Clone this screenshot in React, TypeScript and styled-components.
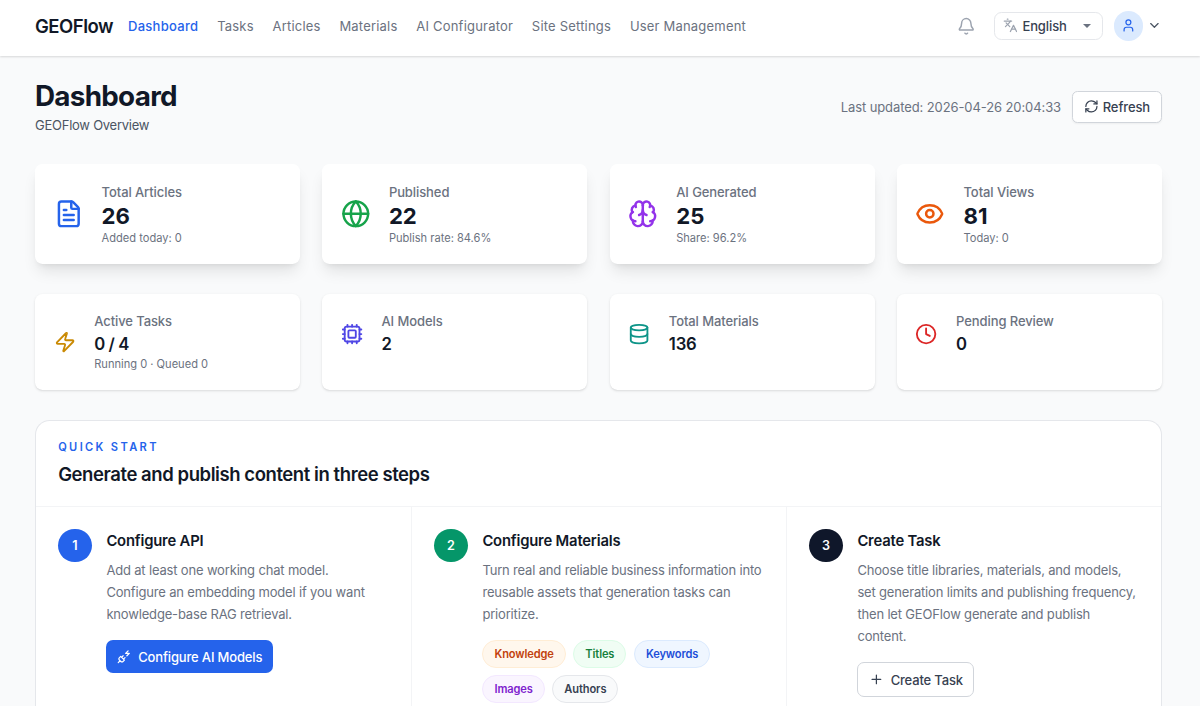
import React from "react";
import styled, { createGlobalStyle } from "styled-components";
import {
  Bell, Brain, ChevronDown, Clock, Cpu, Database, Eye, FileText, Globe, Languages, Plus, RefreshCw, User, Zap,
} from "lucide-react";

const GlobalStyle = createGlobalStyle`
  *, *::before, *::after { box-sizing: border-box; }
  html { height: 100%; overflow: hidden; }
  body {
    margin: 0;
    height: 100%;
    overflow: hidden;
    background: #f9fafb;
    color: #111827;
    font-family: Inter, "Liberation Sans", sans-serif;
    font-size: 13px;
    -webkit-font-smoothing: antialiased;
  }
  #root { height: 100%; }
  h1, h2, h3, p { margin: 0; }
  button { font-family: inherit; margin: 0; }
`;

const Page = styled.div`
  display: flex;
  flex-direction: column;
  height: 100%;
`;

const Header = styled.header`
  display: flex;
  flex: none;
  align-items: center;
  height: 56px;
  padding: 0 38px 4.6px 35px;
  background: #fff;
  box-shadow: 0 1px 2px rgba(0, 0, 0, 0.14);
`;

const Brand = styled.div`
  width: 93px;
  font-size: 18.5px;
  font-weight: 600;
  letter-spacing: -0.5px;
  white-space: nowrap;
`;

const Nav = styled.nav`
  display: flex;
  gap: 18.8px;
  flex: 1;
`;

const NavLink = styled.a<{ $active?: boolean }>`
  font-size: 13px;
  font-weight: ${(p) => (p.$active ? 500 : 400)};
  letter-spacing: ${(p) => (p.$active ? 0.28 : 0.2)}px;
  color: ${(p) => (p.$active ? "#2563eb" : "#6b7280")};
  white-space: nowrap;
`;

const HeaderTools = styled.div`
  display: flex;
  align-items: center;
`;

const BellButton = styled.span`
  display: flex;
  color: #9ca3af;
  margin: 1px 18.4px 0 0;
`;

const LanguageSelect = styled.div`
  display: flex;
  align-items: center;
  width: 109px;
  height: 28px;
  padding: 0 11px 0 8px;
  border: 1px solid #e5e7eb;
  border-radius: 7.4px;
  color: #9ca3af;
`;

const LanguageName = styled.span`
  flex: 1;
  margin-left: 5px;
  font-size: 13px;
  font-weight: 500;
  letter-spacing: -0.1px;
  color: #374151;
`;

const Caret = styled.span`
  border: 4px solid transparent;
  border-top: 4.5px solid #6b7280;
  border-bottom: 0;
`;

const Avatar = styled.span`
  display: flex;
  align-items: center;
  justify-content: center;
  width: 29.6px;
  height: 29.6px;
  margin: 0 4px 0 11px;
  border-radius: 50%;
  background: #dbeafe;
  color: #2563eb;
`;

const Chevron = styled.span`
  display: flex;
  color: #4b5563;
`;

const Main = styled.main`
  display: flex;
  flex: 1;
  flex-direction: column;
  min-height: 0;
  padding: 23px 38px 0 35px;
`;

const PageHead = styled.div`
  display: flex;
  flex: none;
  align-items: center;
  justify-content: space-between;
  height: 55.8px;
  margin-bottom: 29.6px;
`;

const PageTitle = styled.h1`
  padding-top: 1px;
  font-size: 27.8px;
  line-height: 33.3px;
  font-weight: 700;
  letter-spacing: -0.7px;
`;

const PageSubtitle = styled.p`
  margin-top: 2.7px;
  font-size: 13px;
  line-height: 18.5px;
  letter-spacing: -0.25px;
  color: #4b5563;
`;

const PageActions = styled.div`
  display: flex;
  align-items: center;
  gap: 11px;
`;

const Updated = styled.span`
  font-size: 13px;
  letter-spacing: -0.1px;
  color: #6b7280;
  white-space: nowrap;
`;

const RefreshButton = styled.button`
  display: flex;
  align-items: center;
  justify-content: center;
  gap: 4px;
  width: 90px;
  height: 32px;
  padding: 0;
  border: 1px solid #d1d5db;
  border-radius: 5.5px;
  background: #fff;
  box-shadow: 0 1px 2px rgba(0, 0, 0, 0.05);
  font-size: 13px;
  font-weight: 500;
  letter-spacing: -0.1px;
  color: #374151;
`;

const StatGrid = styled.section`
  display: grid;
  flex: none;
  grid-template-columns: repeat(4, 1fr);
  gap: 22.2px;
  margin-bottom: 29.6px;
`;

const StatCard = styled.article<{ $raised?: boolean }>`
  display: flex;
  align-items: flex-start;
  padding: 18.5px;
  border-radius: 7.4px;
  background: #fff;
  box-shadow: ${(p) =>
    p.$raised
      ? "0 10px 15px -3px rgba(0,0,0,0.1), 0 4px 6px -4px rgba(0,0,0,0.1)"
      : "0 1px 3px rgba(0,0,0,0.1), 0 1px 2px -1px rgba(0,0,0,0.1)"};
`;

const StatBody = styled.div`
  display: flex;
  align-items: center;
  gap: 18.5px;
`;

const StatIcon = styled.span<{ $color: string; $large?: boolean }>`
  display: flex;
  padding-bottom: ${(p) => (p.$large ? 1.2 : 0)}px;
  color: ${(p) => p.$color};
`;

const StatLabel = styled.p`
  font-size: 13px;
  line-height: 18.5px;
  font-weight: 500;
  letter-spacing: -0.09px;
  color: #6b7280;
`;

const StatValue = styled.p<{ $large?: boolean }>`
  padding-top: ${(p) => (p.$large ? 0 : 0.8)}px;
  font-size: ${(p) => (p.$large ? 22.2 : 16.7)}px;
  line-height: ${(p) => (p.$large ? 29.6 : 25.1)}px;
  font-weight: ${(p) => (p.$large ? 700 : 600)};
  letter-spacing: ${(p) => (p.$large ? 0 : -0.2)}px;
  word-spacing: ${(p) => (p.$large ? 0 : -0.5)}px;
`;

const StatNote = styled.p`
  font-size: 11.1px;
  line-height: 15.2px;
  margin-bottom: -0.4px;
  color: #6b7280;
`;

const QuickStart = styled.section`
  display: flex;
  flex: 1;
  flex-direction: column;
  min-height: 0;
  border: 1px solid #e5e7eb;
  border-bottom: 0;
  border-radius: 14.8px 14.8px 0 0;
  background: #fff;
`;

const QuickHead = styled.div`
  padding: 19.5px 22.2px 17.5px;
  border-bottom: 1px solid #f3f4f6;
`;

const Eyebrow = styled.p`
  font-size: 11.1px;
  line-height: 14.8px;
  font-weight: 600;
  letter-spacing: 2.35px;
  color: #2563eb;
`;

const QuickTitle = styled.h2`
  margin-top: 7.4px;
  font-size: 18.5px;
  line-height: 25.9px;
  font-weight: 600;
  letter-spacing: -0.43px;
`;

const Steps = styled.div`
  display: grid;
  flex: 1;
  grid-template-columns: repeat(3, 1fr);
  min-height: 0;
`;

const Step = styled.article`
  display: flex;
  gap: 14.8px;
  min-height: 0;
  padding: 22.2px 22.2px 0;
  & + & { border-left: 1px solid #f3f4f6; }
`;

const StepNumber = styled.span<{ $color: string }>`
  display: flex;
  flex: none;
  align-items: center;
  justify-content: center;
  width: 33.4px;
  height: 33.4px;
  border-radius: 50%;
  background: ${(p) => p.$color};
  color: #fff;
  font-size: 12.6px;
  font-weight: 600;
`;

const StepBody = styled.div`
  display: flex;
  flex-direction: column;
  align-items: flex-start;
`;

const StepTitle = styled.h3`
  padding-top: 1px;
  font-size: 14.8px;
  line-height: 22.2px;
  font-weight: 600;
  letter-spacing: -0.18px;
`;

const StepText = styled.p`
  margin: 6.4px 0 14.8px;
  font-size: 13px;
  line-height: 22.2px;
  letter-spacing: -0.17px;
  color: #6b7280;
  white-space: pre;
`;

const StepButton = styled.button<{ $primary?: boolean }>`
  display: flex;
  flex: none;
  align-items: center;
  justify-content: center;
  gap: ${(p) => (p.$primary ? 6.4 : 7)}px;
  width: ${(p) => (p.$primary ? 166.6 : 117)}px;
  height: ${(p) => (p.$primary ? 33.4 : 35.2)}px;
  padding: 0;
  border: ${(p) => (p.$primary ? "0" : "1px solid #d1d5db")};
  border-radius: 7px;
  background: ${(p) => (p.$primary ? "#2563eb" : "#fff")};
  color: ${(p) => (p.$primary ? "#fff" : "#374151")};
  font-size: 13px;
  font-weight: 500;
  letter-spacing: -0.16px;
  white-space: nowrap;
`;

const Chips = styled.div`
  display: flex;
  flex-wrap: wrap;
  gap: 7.4px;
  max-width: 280px;
`;

const Chip = styled.span<{ $tone: Tone }>`
  height: 27.8px;
  padding: 1px 11.1px 0;
  border: 1px solid ${(p) => tones[p.$tone].border};
  border-radius: 14px;
  background: ${(p) => tones[p.$tone].fill};
  color: ${(p) => tones[p.$tone].text};
  font-size: 11.1px;
  line-height: 25.8px;
  font-weight: 600;
  letter-spacing: -0.12px;
`;

const tones = {
  orange: { border: "#ffedd5", fill: "#fff7ed", text: "#c2410c" },
  green: { border: "#dcfce7", fill: "#f0fdf4", text: "#15803d" },
  blue: { border: "#dbeafe", fill: "#eff6ff", text: "#1d4ed8" },
  purple: { border: "#f3e8ff", fill: "#faf5ff", text: "#7e22ce" },
  gray: { border: "#e5e7eb", fill: "#f9fafb", text: "#374151" },
};
type Tone = keyof typeof tones;

const PlugZapIcon = () => (
  <svg width="14.8" height="14.8" viewBox="0 0 24 24" fill="none" stroke="currentColor" strokeWidth="2" strokeLinecap="round" strokeLinejoin="round">
    <path d="M6.300 20.300a2.400 2.400 0 0 0 3.400 0L12 18l-6-6-2.300 2.300a2.400 2.400 0 0 0 0 3.400ZM2 22l3-3M7.500 13.500 10 11M10.500 16.500 13 14M18 3l-4 4h6l-4 4" />
  </svg>
);

const navItems = ["Dashboard", "Tasks", "Articles", "Materials", "AI Configurator", "Site Settings", "User Management"];

const mainStats = [
  { icon: FileText, color: "#2563eb", label: "Total Articles", value: "26", note: "Added today: 0" },
  { icon: Globe, color: "#16a34a", label: "Published", value: "22", note: "Publish rate: 84.6%" },
  { icon: Brain, color: "#9333ea", label: "AI Generated", value: "25", note: "Share: 96.2%" },
  { icon: Eye, color: "#ea580c", label: "Total Views", value: "81", note: "Today: 0" },
];

const minorStats = [
  { icon: Zap, color: "#ca8a04", label: "Active Tasks", value: "0 / 4", note: "Running 0 · Queued 0" },
  { icon: Cpu, color: "#4f46e5", label: "AI Models", value: "2", note: "" },
  { icon: Database, color: "#0d9488", label: "Total Materials", value: "136", note: "" },
  { icon: Clock, color: "#dc2626", label: "Pending Review", value: "0", note: "" },
];

const chips: [string, Tone][] = [
  ["Knowledge", "orange"],
  ["Titles", "green"],
  ["Keywords", "blue"],
  ["Images", "purple"],
  ["Authors", "gray"],
];

export default function App() {
  return (
    <Page>
      <GlobalStyle />
      <Header>
        <Brand>GEOFlow</Brand>
        <Nav>
          {navItems.map((item, i) => (
            <NavLink key={item} $active={i === 0}>{item}</NavLink>
          ))}
        </Nav>
        <HeaderTools>
          <BellButton><Bell size={18.5} strokeWidth={1.9} /></BellButton>
          <LanguageSelect>
            <Languages size={14.8} />
            <LanguageName>English</LanguageName>
            <Caret />
          </LanguageSelect>
          <Avatar><User size={14.8} /></Avatar>
          <Chevron><ChevronDown size={14.8} /></Chevron>
        </HeaderTools>
      </Header>
      <Main>
        <PageHead>
          <div>
            <PageTitle>Dashboard</PageTitle>
            <PageSubtitle>GEOFlow Overview</PageSubtitle>
          </div>
          <PageActions>
            <Updated>Last updated: 2026-04-26 20:04:33</Updated>
            <RefreshButton><RefreshCw size={14.8} />Refresh</RefreshButton>
          </PageActions>
        </PageHead>
        <StatGrid>
          {mainStats.map(({ icon: Icon, ...s }) => (
            <StatCard key={s.label} $raised>
              <StatBody>
                <StatIcon $color={s.color} $large><Icon size={29.6} /></StatIcon>
                <div>
                  <StatLabel>{s.label}</StatLabel>
                  <StatValue $large>{s.value}</StatValue>
                  <StatNote>{s.note}</StatNote>
                </div>
              </StatBody>
            </StatCard>
          ))}
        </StatGrid>
        <StatGrid>
          {minorStats.map(({ icon: Icon, ...s }) => (
            <StatCard key={s.label}>
              <StatBody>
                <StatIcon $color={s.color}><Icon size={22.2} /></StatIcon>
                <div>
                  <StatLabel>{s.label}</StatLabel>
                  <StatValue>{s.value}</StatValue>
                  {s.note && <StatNote>{s.note}</StatNote>}
                </div>
              </StatBody>
            </StatCard>
          ))}
        </StatGrid>
        <QuickStart>
          <QuickHead>
            <Eyebrow>QUICK START</Eyebrow>
            <QuickTitle>Generate and publish content in three steps</QuickTitle>
          </QuickHead>
          <Steps>
            <Step>
              <StepNumber $color="#2563eb">1</StepNumber>
              <StepBody>
                <StepTitle>Configure API</StepTitle>
                <StepText>{"Add at least one working chat model.\nConfigure an embedding model if you want\nknowledge-base RAG retrieval."}</StepText>
                <StepButton $primary><PlugZapIcon />Configure AI Models</StepButton>
              </StepBody>
            </Step>
            <Step>
              <StepNumber $color="#059669">2</StepNumber>
              <StepBody>
                <StepTitle>Configure Materials</StepTitle>
                <StepText>{"Turn real and reliable business information into\nreusable assets that generation tasks can\nprioritize."}</StepText>
                <Chips>
                  {chips.map(([name, tone]) => <Chip key={name} $tone={tone}>{name}</Chip>)}
                </Chips>
              </StepBody>
            </Step>
            <Step>
              <StepNumber $color="#0f172a">3</StepNumber>
              <StepBody>
                <StepTitle>Create Task</StepTitle>
                <StepText>{"Choose title libraries, materials, and models,\nset generation limits and publishing frequency,\nthen let GEOFlow generate and publish\ncontent."}</StepText>
                <StepButton><Plus size={14.8} />Create Task</StepButton>
              </StepBody>
            </Step>
          </Steps>
        </QuickStart>
      </Main>
    </Page>
  );
}
